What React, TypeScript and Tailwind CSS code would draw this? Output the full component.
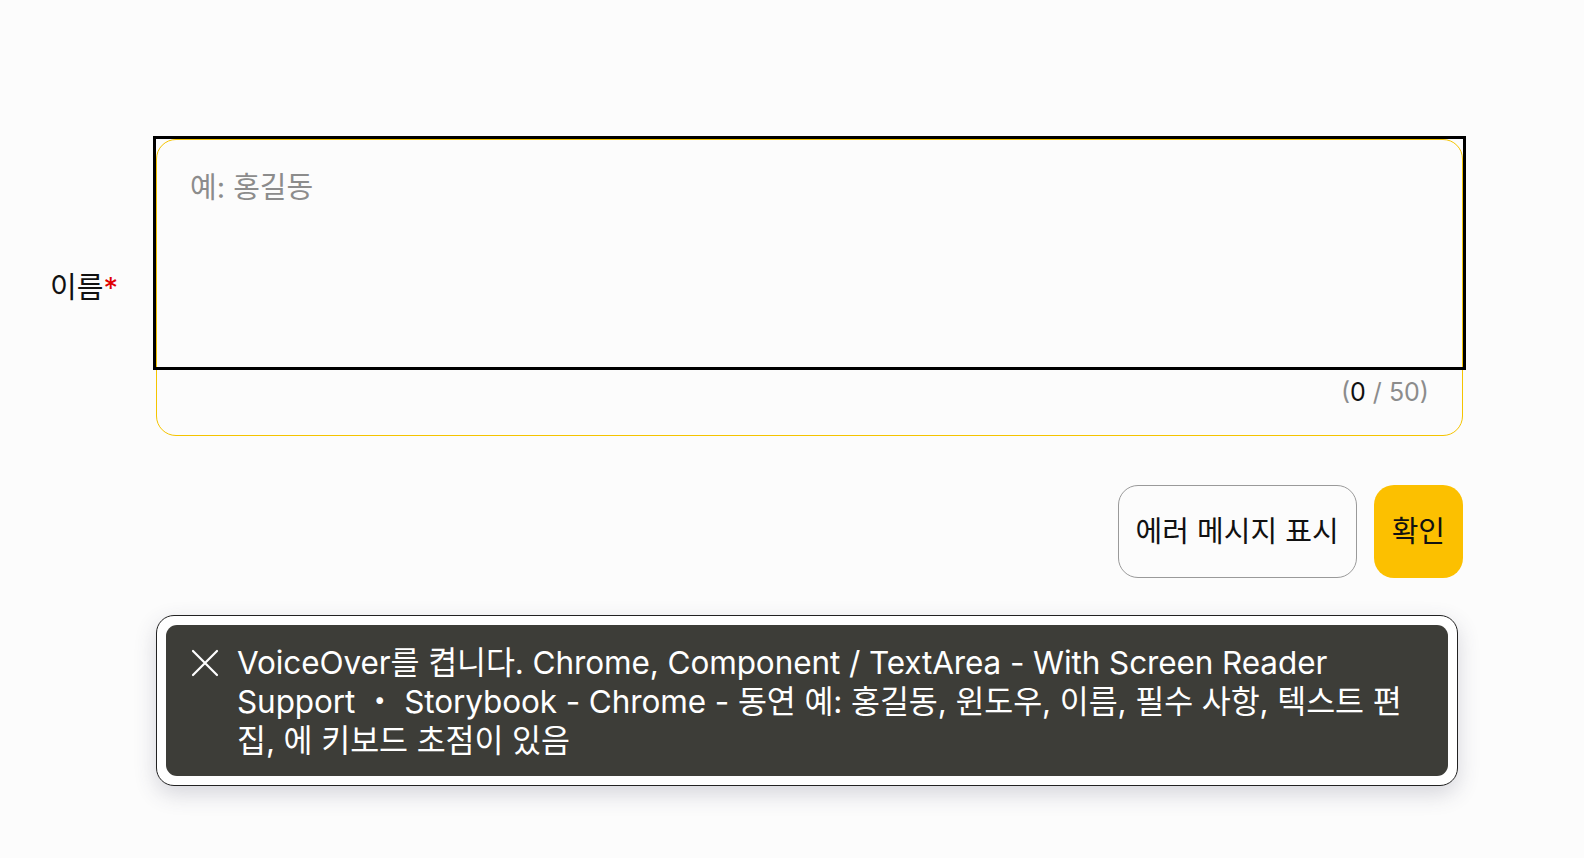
import React from "react"

const font = "font-['Inter','Noto_Sans_CJK_KR',sans-serif]"

const CloseIcon = () => (
    <svg width="28" height="28" viewBox="0 0 28 28" className="shrink-0 mt-[6px]">
        <path d="M2 2 L26 26 M26 2 L2 26" stroke="white" strokeWidth="2.2" strokeLinecap="round" />
    </svg>
)

export default function App() {
    return (
        <div className={`w-full h-[858px] overflow-hidden bg-[#fcfcfc] ${font} pt-[139px] pl-[50px] pr-[121px]`}>
            {/* field row */}
            <div className="flex items-center">
                <label className="w-[106px] text-[29px] text-[#111] leading-none">
                    이름<span className="text-[#e00000]">*</span>
                </label>
                <div className="flex-1 border-[1.5px] border-[#f5c400] rounded-[20px] flex flex-col">
                    <textarea
                        placeholder="예: 홍길동"
                        className="h-[226px] w-full resize-none bg-transparent px-[33px] pt-[28px] text-[29px] leading-[39px] placeholder:text-[#8c8c8c] outline-[3px] outline-solid outline-black outline-offset-[1px]"
                    />
                    <div className="mt-[8px] pb-[25px] pr-[33px] text-right text-[25px] leading-[36px] text-[#8c8c8c]">
                        (<span className="text-[#111]">0</span> / 50)
                    </div>
                </div>
            </div>

            {/* buttons */}
            <div className="flex justify-end gap-[17px] mt-[49px]">
                <button className="h-[93px] px-[17px] border-[1.5px] border-[#9a9a9a] rounded-[20px] text-[29px] text-[#111] bg-transparent">
                    에러 메시지 표시
                </button>
                <button className="h-[93px] px-[18px] rounded-[20px] bg-[#fcc000] text-[29px] text-[#111]">
                    확인
                </button>
            </div>

            {/* voiceover caption */}
            <div className="mt-[37px] ml-[106px] mr-[5px] bg-white border border-[#222] rounded-[18px] p-[9px] shadow-[0_8px_22px_rgba(60,60,90,0.2)]">
                <div className="bg-[#3d3d38] rounded-[11px] flex gap-[18px] pl-[25px] pr-[20px] pt-[18px] pb-[16px]">
                    <CloseIcon />
                    <p className="text-white text-[31.5px] leading-[39px] tracking-[-0.1px] whitespace-nowrap">
                        VoiceOver를 켭니다. Chrome, Component / TextArea - With Screen Reader<br />
                        Support ・ Storybook - Chrome - 동연 예: 홍길동, 윈도우, 이름, 필수 사항, 텍스트 편<br />
                        집, 에 키보드 초점이 있음
                    </p>
                </div>
            </div>
        </div>
    )
}
